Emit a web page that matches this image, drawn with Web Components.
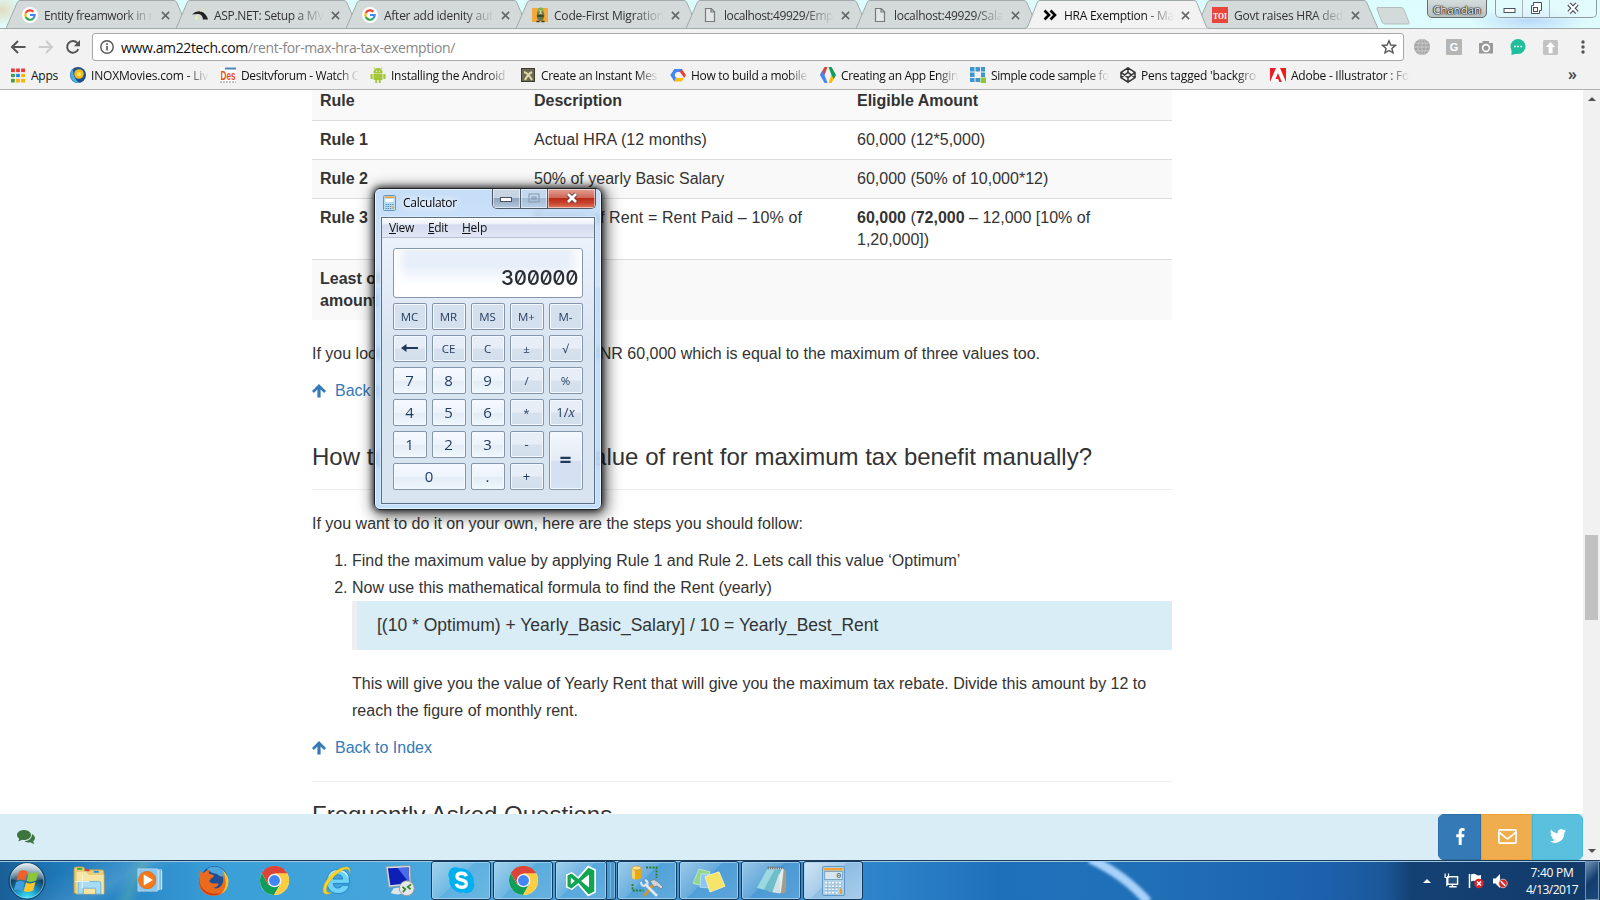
<!DOCTYPE html>
<html lang="en">
<head>
<meta charset="utf-8">
<title>HRA Exemption</title>
<style>
html,body{margin:0;height:100%}
body{width:1600px;height:900px;overflow:hidden;background:#fff;font-family:"Liberation Sans",Arial,sans-serif}
</style>
</head>
<body>
<desktop-screen></desktop-screen>
<script>
const UI = '"Open Sans","Noto Sans",sans-serif';

const CHROME = `<circle cx="16" cy="16" r="15" fill="#fff"/><path d="M16 16 3 8.500A15 15 0 0 1 29 8.500H16z" fill="#db4437"/><path d="M3 8.500A15 15 0 0 0 15.500 31L22 19.500 9.500 20z" fill="#0f9d58"/><path d="M29 8.500A15 15 0 0 1 15.500 31L22.500 19 16 8.500z" fill="#ffcd40"/><path d="M3 8.500 9.500 20 16 16V8.500h13A15 15 0 0 0 3 8.500z" fill="#db4437"/><circle cx="16" cy="16" r="7" fill="#f5f5f5"/><circle cx="16" cy="16" r="5.600" fill="#4285f4"/>`;

const ICONS = {
  google: ['0 0 16 16', `<circle cx="8" cy="8" r="8" fill="#fff"/><g fill="none" stroke-width="2.200"><path d="M11.400 4.800A4.700 4.700 0 0 0 3.800 5.900" stroke="#ea4335"/><path d="M3.800 5.900a4.700 4.700 0 0 0 0 4.200" stroke="#fbbc05"/><path d="M3.800 10.100a4.700 4.700 0 0 0 7.300 1.500" stroke="#34a853"/><path d="M11.100 11.600A4.700 4.700 0 0 0 12.700 8H8" stroke="#4285f4"/></g>`],
  aspnet: ['0 0 16 16', `<path d="M0 7.500Q4 3.500 9 4.500q5 1.500 7 8h-5q-.5-5-4.500-5.500Q3 6.800 0 7.500z" fill="#222"/><path d="M2 12.500 4.500 8l2 4.500z" fill="#dff0b0"/><path d="M8 4.500q2-2 3-2" stroke="#e8e8a0" fill="none"/>`],
  migrate: ['0 0 16 16', `<rect y="1" width="16" height="14" fill="#f5a83c"/><ellipse cx="8.500" cy="8.500" rx="3.800" ry="5.500" fill="#6a7a48"/><circle cx="8.500" cy="3.500" r="3" fill="#7fb04e"/><circle cx="8.500" cy="5" r="2" fill="#d6cf9a"/><path d="M4.500 14.500h3M9.500 14.500h3M5.500 9h6M6.500 5h1M9.500 5h1" stroke="#2c3a1d" stroke-width="1.300"/>`],
  doc: ['0 0 16 16', `<path d="M3.500 1.500h5.800l3.200 3.200v9.800h-9zM9 1.500V5h3.500" fill="#e4e6e6" stroke="#757a7a" stroke-width="1.200"/>`],
  chevs: ['0 0 16 16', `<path d="M2.500 3.500 7 8l-4.500 4.500M8.500 3.500 13 8l-4.500 4.500" fill="none" stroke="#000" stroke-width="2.600"/>`],
  toi: ['0 0 16 16', `<rect width="16" height="16" fill="#e8463c"/><text x="8" y="11.500" text-anchor="middle" textLength="14" lengthAdjust="spacingAndGlyphs" font-family="Liberation Serif" font-weight="bold" font-size="9" fill="#fff">TOI</text>`],
  x: ['0 0 10 10', `<path d="M1 1 9 9M9 1 1 9" stroke="#5f6464" stroke-width="1.700"/>`],
  back: ['0 0 16 16', `<path d="M15.500 8H2.500M8 2 2 8l6 6" fill="none" stroke="#555" stroke-width="2"/>`],
  fwd: ['0 0 16 16', `<path d="M.5 8h13M8 2l6 6-6 6" fill="none" stroke="#ccc" stroke-width="2"/>`],
  reload: ['0 0 16 16', `<path d="M13.300 10.200A5.800 5.800 0 1 1 12.300 4" fill="none" stroke="#555" stroke-width="2"/><path d="M15 1v6.200H8.800z" fill="#555"/>`],
  info: ['0 0 16 16', `<circle cx="8" cy="8" r="6.200" fill="none" stroke="#555" stroke-width="1.400"/><path d="M8 7v4.500M8 4.300v1.600" stroke="#555" stroke-width="1.600"/>`],
  star: ['0 0 16 16', `<path d="M8 1.800 9.800 6l4.600.4-3.500 3 1.100 4.500L8 11.500l-4 2.400 1.100-4.500-3.500-3L6.200 6z" fill="none" stroke="#555" stroke-width="1.400"/>`],
  globe: ['0 0 16 16', `<circle cx="8" cy="8" r="8" fill="#a5a5a5"/><path d="M8 0v16M0 8h16M1.500 4.200h13M1.500 11.800h13" stroke="#c9c9c9" fill="none"/><ellipse cx="8" cy="8" rx="4" ry="8" stroke="#c9c9c9" fill="none"/>`],
  gbox: ['0 0 16 16', `<rect width="16" height="16" rx="1" fill="#b5b5b5"/><text x="8" y="12" text-anchor="middle" font-family="Liberation Sans" font-weight="bold" font-size="11" fill="#fff">G</text>`],
  cam: ['0 0 16 16', `<path d="M1 4h3.500V2H11v2h4v10.500H1z" fill="#999"/><circle cx="8" cy="9" r="3.400" fill="none" stroke="#fff" stroke-width="1.600"/>`],
  chat: ['0 0 16 16', `<circle cx="8" cy="7.500" r="7.500" fill="#1fbf9c"/><path d="M1.500 9v7l6-1.500z" fill="#1fbf9c"/><path d="M4 7.500h1.800M7.200 7.500H9M10.400 7.500h1.800" stroke="#fff" stroke-width="1.700"/>`],
  upbox: ['0 0 16 16', `<rect width="16" height="16" rx="1.500" fill="#c3c3c3"/><path d="m8 2 5 5.500h-2.800V14H6V7.500H3z" fill="#fff"/>`],
  dots: ['0 0 16 16', `<g fill="#555"><circle cx="8" cy="3" r="1.700"/><circle cx="8" cy="8" r="1.700"/><circle cx="8" cy="13" r="1.700"/></g>`],
  apps: ['0 0 16 16', `<path d="M1 1.500h4v4H1zM6 1.500h4v4H6zM11 1.500h4v4h-4z" fill="#e53935"/><path d="M1 6.500h4v4H1z" fill="#43a047"/><path d="M6 6.500h4v4H6z" fill="#1e88e5"/><path d="M11 6.500h4v4h-4z" fill="#fbb300"/><path d="M1 11.500h4v4H1z" fill="#43a047"/><path d="M6 11.500h4v4H6zM11 11.500h4v4h-4z" fill="#fbb300"/><path d="M5.500 1v15M10.500 1v15M0 6h16M0 11h16" stroke="#f2f2f2" stroke-width="1.300"/>`],
  inox: ['0 0 16 16', `<circle cx="8" cy="8" r="8" fill="#1c4f8c"/><path d="M3 2a8 8 0 0 0 6.500 13.800Q3 12 3 2z" fill="#49b0e6"/><circle cx="9" cy="7" r="4.800" fill="#f5b81c"/><circle cx="9" cy="7" r="2.200" fill="#fde25a"/>`],
  des: ['0 0 16 16', `<rect width="16" height="16" fill="#fff"/><text x=".5" y="12.500" textLength="15" lengthAdjust="spacingAndGlyphs" font-family="Liberation Sans" font-weight="bold" font-size="12" fill="#e8501c">Des</text><path d="M5 1.500h11" stroke="#4b86b8" stroke-width="2"/><path d="M0 15h16" stroke="#888" stroke-dasharray="2 1"/>`],
  android: ['0 0 16 16', `<path d="M3.500 6.500V5a4.500 4 0 0 1 9 0v1.500z" fill="#a4c639"/><path d="m4 .5 1.500 2M12 .5l-1.500 2" stroke="#a4c639"/><path d="M3.500 7h9v6h-1.800v3H8.800v-3H7.200v3H5.300v-3H3.500zM.5 7h2.200v5H.5zM13.300 7h2.200v5h-2.200z" fill="#a4c639"/><path d="M6 4.200h1M9 4.200h1" stroke="#fff"/>`],
  xbox: ['0 0 16 16', `<rect x="1" y="1" width="14" height="14" fill="#6b6a55"/><path d="M4 5q4 1 8 8M12 5Q8 7 5 13" stroke="#e2d9a8" stroke-width="2" fill="none"/><rect x="1.500" y="1.500" width="13" height="13" fill="none" stroke="#3b3b30"/>`],
  gcloud: ['0 0 16 16', `<path d="M4.500 2h7L13 4.500 8 5.500 4 8 2.500 5.500z" fill="#4285f4"/><path d="M11.500 1.500 15.800 8l-1.500 2.500L10 5z" fill="#ea4335"/><path d="M4.500 2 .3 8l4 6.500 3-3.500L4.500 8 7 4z" fill="#4285f4"/><path d="m4.300 14.500 1.500-3.500h5.500l2.900-.5-2.500 4z" fill="#fbbc05"/><path d="m10 5 5.800 3-1.500 2.500z" fill="#ea4335"/><circle cx="8" cy="8" r="3" fill="#f5f5f5"/>`],
  gdev: ['0 0 16 16', `<path d="M4.500 0H7.500L4.500 8H0z" fill="#db4437"/><path d="M0 8 2.200 3.800 4.500 8l3 8h-3z" fill="#4285f4"/><path d="M11.500 0h-3l3 8H16z" fill="#0f9d58"/><path d="M16 8h-4.500l-3 8h3z" fill="#fbbc05"/><path d="m11.500 8 2.200 4L16 8z" fill="#0f9d58"/>`],
  blocks: ['0 0 16 16', `<g fill="#3d96d0"><path d="M0 0h4.500v4.500H0zM5.500 0H10v4.500H5.500zM11 0h4v4.500h-4zM0 5.500h4.500V10H0zM11 5.500h4V10h-4zM0 11h4.500v4H0zM5.500 11H10v4H5.500z"/></g><path d="M10.500 10.500H16V16h-5.500z" fill="#8cc63e"/>`],
  codepen: ['0 0 16 16', `<path d="m8 .8 7 4.500v5.400l-7 4.500-7-4.500V5.300zM8 .8v4.700M8 10.500v4.700M1 5.300l7 5.200 7-5.200M1 10.700l7-5.200 7 5.200" fill="none" stroke="#333" stroke-width="1.500"/>`],
  adobe: ['0 0 16 16', `<rect y="1" width="16" height="14" fill="#fff"/><path d="M0 1h6L0 15zM16 1h-6l6 14zM8 6l3.800 9H9.300l-1.100-3H5.500z" fill="#ed1c24"/>`],
  arrowup: ['0 0 14 14', `<path d="m7 0 7 7-1.900 1.900-3.500-3.500V13.500H5.400V5.400L1.900 8.900 0 7z" fill="#337ab7"/>`],
  comments: ['0 0 18 14', `<path d="M7 0c4 0 7 2.300 7 5s-3 5-7 5q-1 0-2-.2Q3.300 11.200.9 11.300q1.200-1 1.300-2.500Q0 7.300 0 5c0-2.700 3-5 7-5z" fill="#3c763d"/><path d="M15 4q3 1.500 3 4 0 1.900-1.800 3.200.2 1.600 1.300 2.500-2.500 0-4-1.500-3.500.7-6-1 7.500-.7 7.500-7.200z" fill="#3c763d"/>`],
  fb: ['0 0 10 18', `<path d="M9.500.2v2.900H7.800C6.500 3.100 6.300 3.700 6.300 4.600v2h3.100l-.4 3.200H6.300V18H3V9.800H.3V6.600H3V4.200C3 1.500 4.600 0 7.100 0q1.600 0 2.400.2z" fill="#fff"/>`],
  mail: ['0 0 19 15', `<rect x=".9" y=".9" width="17.200" height="13.200" rx="1.200" fill="none" stroke="#fff" stroke-width="1.700"/><path d="M1.500 3.500 8.500 9.300q1 .8 2 0L17.500 3.500" fill="none" stroke="#fff" stroke-width="1.700"/>`],
  tw: ['0 0 24 20', `<path d="M24 2.400a10 10 0 0 1-2.800.8A4.900 4.900 0 0 0 23.300.5a10 10 0 0 1-3.100 1.200 4.900 4.900 0 0 0-8.400 4.500A14 14 0 0 1 1.700 1a4.900 4.900 0 0 0 1.500 6.600A5 5 0 0 1 1 7c0 2.300 1.700 4.400 3.900 4.900a5 5 0 0 1-2.200.1 4.900 4.900 0 0 0 4.600 3.400A9.900 9.900 0 0 1 0 17.500 14 14 0 0 0 21.500 5q1.500-1.100 2.500-2.600z" fill="#fff"/>`],
  calcsmall: ['0 0 13 16', `<rect x=".5" y=".5" width="12" height="15" rx="1" fill="#b9dcf2" stroke="#5f98c4"/><path d="M1.500 2.200h10" stroke="#f0a238" stroke-width="1.500"/><rect x="2.500" y="4" width="8" height="3" fill="#fff"/><path d="M2.500 9.500h8M2.500 11.500h6M2.500 13.500h6" stroke="#4f8fc0" stroke-dasharray="1.400 .8"/><path d="M10 11v3" stroke="#f0a030" stroke-width="1.500"/>`],
  calc: ['0 0 22 30', `<rect x=".5" y=".5" width="21" height="29" rx="1.500" fill="#b0d3ec" stroke="#5f98c4"/><rect x="2" y="2" width="18" height="2.500" fill="#f0a238"/><rect x="2.500" y="5.500" width="17" height="8" fill="#d6e6ef" stroke="#7fa6c4"/><text x="18.500" y="12.500" text-anchor="end" font-family="Liberation Mono" font-size="8" fill="#345">0</text><path d="M3 17h16M3 20.300h16M3 23.600h12M3 26.900h12" stroke="#6d9cc2" stroke-width="2.500" stroke-dasharray="2.500 .8"/><path d="M3 16.800h16M3 20.100h16M3 23.400h12M3 26.700h12" stroke="#fff" stroke-width="1.900" stroke-dasharray="2.100 1.200"/><rect x="17" y="22.500" width="2.200" height="5.500" fill="#f0a030"/>`],
  orb: ['0 0 38 38', `<defs><radialGradient id="o" cx=".5" cy="1" r="1"><stop offset="0" stop-color="#3ff1ff"/><stop offset=".35" stop-color="#1a8fc4"/><stop offset=".65" stop-color="#12405f"/><stop offset="1" stop-color="#8fb3c6"/></radialGradient><linearGradient id="g" x2="0" y2="1"><stop stop-color="#fff" stop-opacity=".75"/><stop offset="1" stop-color="#fff" stop-opacity=".12"/></linearGradient></defs><circle cx="19" cy="19" r="18" fill="url(#o)" stroke="#123a55"/><circle cx="19" cy="19" r="16.800" fill="none" stroke="#a8dcee" stroke-opacity=".6"/><path d="M3 17a16 16 0 0 1 32 0q-16 5-32 0z" fill="url(#g)"/><path d="M11 9.500q4-2.500 8.500 0l-2.300 9q-4-2.200-8.500 0z" fill="#f0602a"/><path d="M21 10q4 2.200 9.500-.5l-2.300 9q-5 2.500-9.500.5z" fill="#8cc63c"/><path d="M8.200 20q4-2.200 8.500 0l-2.300 8.500q-4-2.200-8.500 0z" fill="#3f9fe0"/><path d="M18 20.500q4.500 2.200 9.500-.5l-2.300 8.500q-5 2.500-9.500.5z" fill="#fbc52c"/>`],
  explorer: ['0 0 32 30', `<path d="M1 3q0-2 2-2h7l2 3h16q2 0 2 2v22H1z" fill="#e9cf7c" stroke="#b8954a" stroke-width=".8"/><path d="M4 2h5v2H4z" fill="#3fae2a"/><path d="M11 3.500h5v2h-5z" fill="#d6392e"/><path d="M20 5h5v2h-5z" fill="#2c8fd6"/><path d="M3 5.500h10l2 3h15V29H3z" fill="#f6e6a2" stroke="#d8bc6a" stroke-width=".6"/><path d="M5 29V18q0-2 2-2h18q2 0 2 2v11h-5v-6H10v6z" fill="#a6dcf4" stroke="#5fa8d6" stroke-width=".8"/><path d="M9 9v14M2 16h14" stroke="#fff" stroke-opacity=".8"/>`],
  wmp: ['0 0 30 26', `<rect x="6" y="1" width="20" height="22" fill="#b8dcf2" opacity=".6"/><path d="M22.500 2v21M25.500 3v19" stroke="#d6ecf8" stroke-width="1"/><rect x="1" y="1" width="20" height="23" fill="#8fc5e8" stroke="#c0e0f4" stroke-width=".8"/><circle cx="10.500" cy="12.500" r="9" fill="#f27a1a" stroke="#c85a10" stroke-width=".5"/><path d="M7 6.800v11.400l9.500-5.700z" fill="#fff"/>`],
  firefox: ['0 0 32 32', `<circle cx="17" cy="14.500" r="13.500" fill="#1d4f94"/><path d="M9 4q8-5 16 0 4 4 3 8-5 1-9-3-6-1-10-5z" fill="#4ea6dd"/><path d="M2 6q1.500 2.500 4 2 3-3 6-3-1.500 2-.5 4l5 1.500q0 2.500-3 3.500l-2 2.500q2 3.500 6 2.500 2-.5 4 .5-2 3.500-6 4 5 2 8.500-2 3.500-5 1-12 6 5 5 11-1 11-14 11.500Q3 31 1 20 .5 12 2 6z" fill="#ec6a1e"/><path d="M25.500 5q6 6 6 12-.5 10-8 13 7-6 4.500-16-.5-5-2.500-9z" fill="#fbc22d"/><path d="M1.500 12q-1 9 5 14 8 6 19 2-11 7-20-1-6-7-4-15z" fill="#c43c1a"/>`],
  chrome: ['0 0 32 32', CHROME],
  ie: ['0 0 34 32', `<path d="M18 4.500C10.500 4.500 6 10 6 17s5 12.500 12 12.500c6 0 10.500-3 12-8.500h-7.500q-1.300 2.800-4.500 2.800-4.500 0-5-4.800h17.500Q31.500 4.500 18 4.500zm-5 10Q13.500 10 18 10t5 4.500z" fill="#6fd3f7" stroke="#1f86c4"/><path d="M9 12q3-6 9-6 8 0 10.500 6" fill="none" stroke="#c4f0ff" stroke-width="1.500"/><path d="M30.500 9Q32.500 1.500 26 2 16 3.500 8 13 1 22 2.500 28q2 4 9 .5Q5.500 29.500 5.500 25 7 18 14 11.500 23 4 27.500 4.200 31 5 30.500 9z" fill="#fbd42a" stroke="#d9a514" stroke-width=".5"/>`],
  rdp: ['0 0 32 32', `<path d="m2 1.500 25-1 1 19.500-23 3z" fill="#d9dfe6" stroke="#8b969f" stroke-width=".8"/><path d="m4 3.300 21.500-.8.700 16-19.700 2.300z" fill="#0d1fb5"/><path d="m14 3 11.500-.5.700 16z" fill="#4b6be8"/><path d="m10 24 8-1 2 6q-6 3-13 0z" fill="#dfe4e8"/><circle cx="23.500" cy="24" r="7.700" fill="#e6e6e6" stroke="#9a9a9a"/><path d="m19 22.500 3 2.500-2.500 3M28 20l-3.500 2.500 3 2.500" fill="none" stroke="#2f8a2f" stroke-width="1.800"/>`],
  skype: ['0 0 30 30', `<path d="M8.500 1A8 8 0 0 1 13 2.500 13 13 0 0 1 27.500 17 8 8 0 0 1 17 27.500 13 13 0 0 1 2.500 13 8 8 0 0 1 8.500 1z" fill="#00aff0"/><path d="M20 10.500Q19 7.500 15 7.500q-4.700 0-4.700 3.300 0 2.700 4.500 3.600 5.200 1 5.200 4.100 0 3.500-5 3.500-4.500 0-5.500-3.500" fill="none" stroke="#fff" stroke-width="3.400"/>`],
  vs: ['0 0 32 32', `<path d="M1 9.500 7 7l6 5L23 .5l8 4v23l-8 4L13 20l-6 5-6-2.500z" fill="#fff"/><path d="m2.500 10.500 4-2L13.500 14 23.500 2.800l5.800 2.800v20.800l-5.800 2.800L13.500 18l-7 5.500-4-2z" fill="#0fa551"/><path d="M5.800 12.500v7l4-3.500zM24 9.500v13L16 16z" fill="#fff"/>`],
  tools: ['0 0 32 32', `<path d="M1 3v10q4.500 3 9 0V3z" fill="#e8a818"/><path d="M1 3v10q1.500 1 3 1.400V4z" fill="#f8d468"/><ellipse cx="5.500" cy="3" rx="4.500" ry="2" fill="#fbe08c" stroke="#b87d10" stroke-width=".5"/><path d="M15 2.500h10.500V13M1.500 19v6.500h11" fill="none" stroke="#2f7d22" stroke-width="1.800" stroke-dasharray="2 1.300"/><path d="m13 31 10-12" stroke="#e0921e" stroke-width="2.600"/><path d="m14 19 12 12" stroke="#e3e9ee" stroke-width="2.600"/><path d="M10 17q0 4 4 4M14 15q3 1 2.500 4.500" fill="none" stroke="#dfe5ea" stroke-width="2"/><path d="m19 16 4-1.500 4 2.500 5 5-2 2-4-3-3 1z" fill="#cdd4da" stroke="#5c6870" stroke-width=".6"/>`],
  notes: ['0 0 34 26', `<path d="m7 1 11 3-5 15-12-3z" fill="#93d88a" stroke="#dff5da" stroke-width=".6"/><path d="m9 6 13 1-1 14-13-1z" fill="#8cc4f4" stroke="#dcefff" stroke-width=".6"/><path d="m13 9 14-5 6 15-15 6z" fill="#f8e468" stroke="#fff7c0" stroke-width=".8"/>`],
  notepad: ['0 0 32 32', `<path d="m27 4 4 2v22l-5 2z" fill="#a69c88"/><path d="M12 3h17l-3 26-13-2z" fill="#e6eef0" stroke="#8f9a9c" stroke-width=".5"/><path d="M11.500 4.500h15L17 28 1 23.500z" fill="#6fbccb"/><path d="M11.500 4.500h8L8 25.500l-7-2z" fill="#9bd8e0"/><path d="m24 8-7 20 8 1.500z" fill="#cfe3e6"/><path d="M12 3h17" stroke="#6d7476" stroke-width="3" stroke-dasharray="1.300 1"/>`],
  net: ['0 0 16 16', `<rect x="4" y="4" width="10.500" height="8" fill="#24507e" stroke="#fff" stroke-width="1.500"/><path d="M9 12v2.500M5.500 14.700h8" stroke="#fff" stroke-width="1.500"/><path d="M1.200.5v4.300h3.600V.5M3 5v9" stroke="#fff" stroke-width="1.300" fill="none"/>`],
  flag: ['0 0 16 16', `<path d="M1.500 1v14" stroke="#fff" stroke-width="1.500"/><path d="M3 1.500q3-1.500 5 0t5 .5v7q-3 1-5-.5T3 8.500z" fill="#fff"/><circle cx="11" cy="10.500" r="4.800" fill="#d8262b"/><path d="m9 8.500 4 4M13 8.500l-4 4" stroke="#fff" stroke-width="1.500"/>`],
  mute: ['0 0 16 16', `<path d="M1 5.500h2.500L8 1v14l-4.500-4.500H1z" fill="#fff"/><circle cx="11" cy="10.500" r="4.300" fill="#d8262b" stroke="#fff" stroke-width=".6"/><path d="m8.800 8.300 4.400 4.400" stroke="#fff" stroke-width="1.500"/>`]
};

/* Registers an element whose shadow root is filled from a template. */
function component(name, css, html, after) {
  const t = document.createElement('template');
  t.innerHTML = `<style>*{box-sizing:border-box}${css}</style>${html}`;
  customElements.define(name, class extends HTMLElement {
    connectedCallback() {
      if (this.shadowRoot) return;
      const root = this.attachShadow({mode: 'open'});
      root.append(t.content.cloneNode(true));
      if (after) after(this, root);
    }
  });
}

/* Puts a named icon in place of the element with id "i". */
function placeIcon(el, root) {
  const ic = document.createElement('ui-icon');
  ic.setAttribute('name', el.getAttribute('icon'));
  root.getElementById('i').replaceWith(ic);
}

/* <ui-icon name w h> */
component('ui-icon', `:host{display:block;flex:none}svg{display:block}`, '', (el, root) => {
  const [box, body] = ICONS[el.getAttribute('name')];
  const w = el.getAttribute('w') || 16, h = el.getAttribute('h') || w;
  const holder = document.createElement('template');
  holder.innerHTML = `<svg width="${w}" height="${h}" viewBox="${box}" preserveAspectRatio="none">${body}</svg>`;
  root.append(holder.content);
});

component('browser-tab', `
:host{display:block;width:170px;height:29px;flex:none;position:relative}
svg{position:absolute;left:0;top:0;overflow:visible}
.in{position:relative;display:flex;align-items:center;height:29px;padding:1px 0 0 17px}
.t{width:110px;margin-left:6px;overflow:hidden;white-space:nowrap;font-size:12px;color:#333;-webkit-mask-image:linear-gradient(90deg,#000 80px,transparent 110px)}
.c{margin-left:7px}
:host([active]){z-index:3}
:host([active]) .t{color:#111}`,
`<svg width="184" height="29"><path/></svg><div class="in"><span id="i"></span><div class="t"><slot></slot></div><ui-icon class="c" name="x" w="9"></ui-icon></div>`,
(el, root) => {
  const a = el.hasAttribute('active'), p = root.querySelector('path');
  p.setAttribute('d', a ? 'M-1 28.500Q2 28.500 3 26L12 3Q13 .5 15 .5H169Q171 .5 172 3L181 26Q182 28.500 185 28.500' : 'M1 28.500 12 3Q13 .5 15 .5H169Q171 .5 172 3L183 28.500z');
  p.setAttribute('fill', a ? '#f2f2f2' : '#d4dada');
  p.setAttribute('stroke', '#a2a9a9');
  placeIcon(el, root);
});

component('bookmark-item', `
:host{display:flex;align-items:center;width:150px;height:20px;flex:none}
ui-icon{margin-right:5px}
.t{width:119px;overflow:hidden;white-space:nowrap;font-size:12px;color:#111;-webkit-mask-image:linear-gradient(90deg,#000 96px,transparent 118px)}
:host([short]){width:60px}:host([short]) .t{-webkit-mask-image:none;width:40px}`,
`<span id="i"></span><div class="t"><slot></slot></div>`, placeIcon);

component('caption-buttons', `
:host{display:flex;height:18px;width:102px;border:1px solid #8c9ba0;border-top:0;border-radius:0 0 5px 5px;background:#e6fbfcaa;box-shadow:0 0 2px #fff}
span{display:flex;align-items:center;justify-content:center;width:27px;border-right:1px solid #a8b4b8}
span:last-child{flex:1;border:0}svg{display:block}`,
`<span><svg width="13" height="18"><rect x="1" y="8.500" width="11" height="4" fill="#fff" stroke="#4a4f5c"/></svg></span>
<span><svg width="14" height="18"><path d="M4.500 2.500h8v8h-2v3h-8v-8h2z" fill="#fff" stroke="#4a4f5c"/><rect x="4.500" y="7.500" width="4" height="4" fill="none" stroke="#4a4f5c"/></svg></span>
<span><svg width="14" height="18"><path d="m3 4 8 8.500M11 4l-8 8.500" stroke="#4a4f5c" stroke-width="4.600"/><path d="m3 4 8 8.500M11 4l-8 8.500" stroke="#fff" stroke-width="2.200"/></svg></span>`);

component('browser-chrome', `
:host{display:block;height:90px;font-family:${UI}}
.strip{height:29px;display:flex;padding-left:5px;position:relative;overflow:hidden;background:radial-gradient(ellipse 60px 14px at 1530px 20px,#b8d8fa,transparent),radial-gradient(ellipse 20px 16px at 2px 10px,#e2dcc0,transparent),linear-gradient(180deg,#dcfdfd,#dffcfd)}
.strip:after{content:"";position:absolute;left:0;right:0;bottom:0;height:1px;background:#a2a9a9;z-index:2}
.new{margin:7px 0 0 11px}
.user{margin:-1px 0 0 17px;width:60px;height:19px;border:1px solid #666d70;border-radius:0 0 5px 5px;background:linear-gradient(#d5dcdc,#b9c1c1);text-align:center;font-size:11.500px;line-height:19px;color:#fff;text-shadow:0 0 1px #000,0 0 1px #000,0 0 1px #000,0 0 2px #222}
caption-buttons{margin-left:8px}
.bar{height:32px;margin-top:0;background:#f2f2f2;display:flex;align-items:center;padding:4px 0 0 10px}
.omni{height:28px;width:1312px;margin-left:11px;border:1px solid #a9a9a9;border-radius:3px;background:#fff;display:flex;align-items:center;padding:0 6px}
.url{margin-left:6px;flex:1;font-size:14px;color:#888;white-space:nowrap}.url b{font-weight:400;color:#111}
.marks{height:29px;background:#f2f2f2;border-bottom:1px solid #b1b1b1;display:flex;align-items:center;padding-left:10px}
.more{margin:-2px 0 0 148px;width:30px;font-size:16px;font-weight:600;color:#444;line-height:14px}`,
`<div class="strip">
<browser-tab icon="google"><fit-text w="109">Entity freamwork in r</fit-text></browser-tab>
<browser-tab icon="aspnet"><fit-text w="110">ASP.NET: Setup a MV</fit-text></browser-tab>
<browser-tab icon="google"><fit-text w="109">After add idenity aut</fit-text></browser-tab>
<browser-tab icon="migrate"><fit-text w="110">Code-First Migration</fit-text></browser-tab>
<browser-tab icon="doc"><fit-text w="109">localhost:49929/Emp</fit-text></browser-tab>
<browser-tab icon="doc"><fit-text w="109">localhost:49929/Sala</fit-text></browser-tab>
<browser-tab icon="chevs" active><fit-text w="110">HRA Exemption - Ma</fit-text></browser-tab>
<browser-tab icon="toi"><fit-text w="109">Govt raises HRA ded</fit-text></browser-tab>
<svg class="new" width="34" height="18"><path d="M2 .5H25q2 0 3 2l5 13q.5 1.500-1 1.500H9q-2 0-3-2L1 2Q.5.500 2 .5z" fill="#d2dada" stroke="#b3bdbd"/></svg>
<div class="user">Chandan</div><caption-buttons></caption-buttons>
</div>
<div class="bar"><ui-icon name="back"></ui-icon><ui-icon name="fwd" style="margin-left:12px"></ui-icon><ui-icon name="reload" style="margin-left:11px"></ui-icon>
<div class="omni"><ui-icon name="info"></ui-icon><div class="url"><fit-text w="334"><b>www.am22tech.com</b>/rent-for-max-hra-tax-exemption/</fit-text></div><ui-icon name="star"></ui-icon></div>
<ui-icon name="globe" style="margin-left:10px"></ui-icon><ui-icon name="gbox" style="margin-left:16px"></ui-icon><ui-icon name="cam" style="margin-left:16px"></ui-icon><ui-icon name="chat" style="margin-left:16px"></ui-icon><ui-icon name="upbox" w="15" style="margin-left:17px"></ui-icon><ui-icon name="dots" style="margin-left:17px"></ui-icon></div>
<div class="marks">
<bookmark-item short icon="apps"><fit-text w="27">Apps</fit-text></bookmark-item>
<bookmark-item icon="inox"><fit-text w="117">INOXMovies.com - Liv</fit-text></bookmark-item>
<bookmark-item icon="des"><fit-text w="118">Desitvforum - Watch C</fit-text></bookmark-item>
<bookmark-item icon="android"><fit-text w="114">Installing the Android</fit-text></bookmark-item>
<bookmark-item icon="xbox"><fit-text w="116">Create an Instant Mes</fit-text></bookmark-item>
<bookmark-item icon="gcloud"><fit-text w="116">How to build a mobile</fit-text></bookmark-item>
<bookmark-item icon="gdev"><fit-text w="117">Creating an App Engin</fit-text></bookmark-item>
<bookmark-item icon="blocks"><fit-text w="118">Simple code sample fo</fit-text></bookmark-item>
<bookmark-item icon="codepen"><fit-text w="115">Pens tagged 'backgro</fit-text></bookmark-item>
<bookmark-item icon="adobe"><fit-text w="118">Adobe - Illustrator : Fo</fit-text></bookmark-item>
<div class="more">»</div></div>`);

component('back-link', `
:host{display:flex;align-items:center;height:27px;line-height:27px;color:#337ab7}
ui-icon{margin-right:9px}`,
`<ui-icon name="arrowup" w="14" h="14"></ui-icon><slot></slot>`);

component('rule-table', `
:host{display:block}
div{display:grid;grid-template-columns:214px 323px 323px;border-top:1px solid #ddd;line-height:22px}
div:nth-of-type(odd){background:#f9f9f9}
div:first-of-type{border:0;height:30px}div:first-of-type p{padding-top:0}
p{margin:0;padding:8px}p:first-child,.h{font-weight:700}`,
`<div><p>Rule</p><p class="h">Description</p><p class="h">Eligible Amount</p></div>
<div><p>Rule 1</p><p><fit-text w="173">Actual HRA (12 months)</fit-text></p><p>60,000 (12*5,000)</p></div>
<div><p>Rule 2</p><p>50% of yearly Basic Salary</p><p>60,000 (50% of 10,000*12)</p></div>
<div><p>Rule 3</p><p><fit-text w="268">Excess of Rent = Rent Paid – 10% of</fit-text></p><p><b>60,000</b> (<b>72,000</b> – 12,000 [10% of<br>1,20,000])</p></div>
<div><p>Least of<br>amount</p><p></p><p></p></div>`);

component('formula-box', `:host{display:block;height:49px;background:#d9edf7;border-left:5px solid #eee;padding-left:20px;font-size:17.500px;line-height:49px}`, `<slot></slot>`);

component('article-page', `
:host{display:block;height:724px;overflow:hidden;padding-left:312px;color:#333;font-size:16px;background:#fff}
main{width:860px}
p{margin:0;line-height:27px}
.split{display:flex;justify-content:space-between;white-space:nowrap}
h3{margin:0;font-size:24px;font-weight:400;line-height:26px;height:46px;border-bottom:1px solid #eee}
ol{margin:10px 0 0;padding-left:40px;line-height:27px}`,
`<main><rule-table></rule-table>
<p class="split" style="width:728px;margin-top:20px"><span>If you look at</span><span>INR 60,000 which is equal to the maximum of three values too.</span></p>
<back-link style="margin-top:10px">Back to Index</back-link>
<h3 style="margin-top:40px"><span class="split" style="width:780px"><span>How to</span><span>value of rent for maximum tax benefit manually?</span></span></h3>
<p style="margin-top:20px">If you want to do it on your own, here are the steps you should follow:</p>
<ol><li>Find the maximum value by applying Rule 1 and Rule 2. Lets call this value ‘Optimum’</li>
<li>Now use this mathematical formula to find the Rent (yearly)<formula-box><fit-text w="501.500">[(10 * Optimum) + Yearly_Basic_Salary] / 10 = Yearly_Best_Rent</fit-text></formula-box>
<p style="margin-top:20px">This will give you the value of Yearly Rent that will give you the maximum tax rebate. Divide this amount by 12 to reach the figure of monthly rent.</p></li></ol>
<back-link style="margin-top:10px">Back to Index</back-link>
<h3 style="margin-top:20px;border-top:1px solid #eee;padding-top:20px">Frequently Asked Questions</h3></main>`);

component('share-bar', `
:host{display:flex;height:46px;background:#d9edf7;align-items:stretch;justify-content:space-between}
.c{padding:16px 0 0 17px}
.s{display:flex;width:145px;border-radius:6px;overflow:hidden}
.s span{display:flex;align-items:center;justify-content:center;width:51px;border:1px solid;padding:0 0 2px 1px}
.s span:nth-child(1){background:#337ab7;border-color:#2e6da4;width:43px;padding-left:2px}
.s span:nth-child(2){background:#f0ad4e;border-color:#eea236}
.s span:nth-child(3){background:#5bc0de;border-color:#46b8da}`,
`<div class="c"><ui-icon name="comments" w="18" h="14"></ui-icon></div>
<div class="s"><span><ui-icon name="fb" w="9" h="17"></ui-icon></span><span><ui-icon name="mail" w="19" h="15"></ui-icon></span><span><ui-icon name="tw" w="16" h="14"></ui-icon></span></div>`);

component('scroll-bar', `
:host{display:flex;flex-direction:column;width:17px;background:#f1f1f1;align-items:center;justify-content:space-between}
i{display:block;width:13px;height:85px;background:#c1c1c1;margin-top:434px}
svg{display:block;flex:none}.u{margin:7px 0 0}.d{margin:auto 0 7px}`,
`<svg class="u" width="8" height="4"><path d="M4 0 8 4H0z" fill="#505050"/></svg><i></i><svg class="d" width="8" height="4"><path d="M0 0h8L4 4z" fill="#505050"/></svg>`);

component('calc-key', `
:host{display:flex;align-items:center;justify-content:center;border:1px solid #8596ac;border-radius:2px;box-shadow:inset 0 0 0 1px #f4f9ff;font-size:11.500px;color:#1e395b;background:linear-gradient(#e8eef7 0 48%,#d7e1ee 52%,#d3dfec);padding:0 1px 1px 0}
:host([kind=num]){font-size:15px;background:linear-gradient(#f6f9fe 0,#ecf3fb 50%,#e3ebf5 52%,#eff8fd)}
:host([kind=mem]){background:#d5e0ee}
:host([kind=op]){font-size:13px}
:host([kind=eq]){grid-row:span 2;font-size:21px;font-weight:700;background:linear-gradient(#f3f8fd,#e3ebf6 50%,#d4dfef 52%,#d5e2f5);padding-bottom:3px}
:host([wide]){grid-column:span 2}`, `<slot></slot>`);

component('calculator-window', `
:host{display:block;position:absolute;left:374px;top:188px;width:228px;height:322px;border:1px solid #1e2429;border-radius:6px;font-family:${UI};
box-shadow:inset 0 0 0 1px #f2f9ffcc,0 0 6px 1px #000b,2px 3px 15px 3px #0009;
background:linear-gradient(180deg,#b8d6f6cc,#c4dffccc 98px,#b2d5facc 99px,#b4d6fdd0);backdrop-filter:blur(3px)}
.bar{display:flex;height:28px;padding:6px 0 0 8px}
.title{margin:-1px 0 0 7px;font-size:12px;line-height:18px;color:#000;text-shadow:0 0 7px #fff,0 0 7px #fff;width:89px}
.caps{display:flex;margin-top:-6px;height:20px;border:1px solid #4e5a66;border-top:0;border-radius:0 0 5px 5px;overflow:hidden;width:104px}
.caps span{display:flex;align-items:center;justify-content:center;box-shadow:inset 0 0 0 1px #fff8;background:linear-gradient(#c8d4e2 45%,#8fa3bb 50%,#b4cae0);width:28px;border-right:1px solid #4e5a66}
.caps span:nth-child(2){background:linear-gradient(#c5d9ee 45%,#a5bcd5 50%,#b8d0e8);width:27px}
.caps span:last-child{flex:1;width:auto;border:0;padding-bottom:1px;background:linear-gradient(#e3a194,#cd6a59 45%,#b92b16 50%,#c9452f 75%,#de7a5c)}
.client{margin:0 6px;height:287px;border:1px solid #5d6f82;box-shadow:0 0 0 1px #e2f1ff99;background:linear-gradient(#eef4fd,#d9e4f1 45%);width:214px}
.menu{display:flex;height:20px;gap:14px;padding-left:7px;font-size:12px;line-height:19px;color:#111;background:linear-gradient(#fff 0,#eceffa 6px,#d4dbee 7px,#e2e7f6);border-bottom:1px solid #b9c0d6}
u{text-underline-offset:1px}
.disp{height:50px;margin:10px 11px 5px;border:1px solid #8698ae;border-radius:3px;background:linear-gradient(90deg,#fff,transparent 14px calc(100% - 14px),#fff),linear-gradient(#e9f0fa,#e6eefa 16px,#fff 75%);box-shadow:inset 0 0 0 1px #fff;padding:17px 4px 0 0;text-align:right;font:500 20.500px/24px Inter,sans-serif;font-feature-settings:"zero","tnum";color:#2a2d33}
.keys{display:grid;grid-template-columns:repeat(5,34px);grid-auto-rows:27px;gap:5px;margin-left:11px}
i{font-family:"Liberation Serif";font-size:14px}`,
`<div class="bar"><ui-icon name="calcsmall" w="13" h="16"></ui-icon><div class="title"><fit-text w="54">Calculator</fit-text></div>
<div class="caps"><span><svg width="13" height="8"><rect x=".5" y="2.500" width="11" height="4" fill="#fff" stroke="#47525e"/></svg></span><span><svg width="13" height="11"><rect x="1" y="1" width="10" height="8" fill="none" stroke="#8296ad"/><rect x="4" y="4" width="4" height="2" fill="none" stroke="#8296ad"/></svg></span><span><svg width="14" height="12"><path d="m3 2 8 8M11 2l-8 8" stroke="#5b3434" stroke-width="4.400"/><path d="m3 2 8 8M11 2l-8 8" stroke="#fff" stroke-width="2.800"/></svg></span></div></div>
<div class="client"><div class="menu"><fit-text w="25"><u>V</u>iew</fit-text><fit-text w="20"><u>E</u>dit</fit-text><fit-text w="25"><u>H</u>elp</fit-text></div>
<div class="disp"><fit-text w="77">300000</fit-text></div>
<div class="keys">
<calc-key kind="mem">MC</calc-key><calc-key kind="mem">MR</calc-key><calc-key kind="mem">MS</calc-key><calc-key kind="mem">M+</calc-key><calc-key kind="mem">M-</calc-key>
<calc-key><svg width="17" height="8"><path d="M3 4h14" stroke="#1e395b" stroke-width="2"/><path d="m0 4 5.500-4v8z" fill="#1e395b"/></svg></calc-key><calc-key>CE</calc-key><calc-key>C</calc-key><calc-key>±</calc-key><calc-key>√</calc-key>
<calc-key kind="num">7</calc-key><calc-key kind="num">8</calc-key><calc-key kind="num">9</calc-key><calc-key>/</calc-key><calc-key>%</calc-key>
<calc-key kind="num">4</calc-key><calc-key kind="num">5</calc-key><calc-key kind="num">6</calc-key><calc-key>*</calc-key><calc-key kind="op"><span>1/<i>x</i></span></calc-key>
<calc-key kind="num">1</calc-key><calc-key kind="num">2</calc-key><calc-key kind="num">3</calc-key><calc-key kind="op">-</calc-key><calc-key kind="eq">=</calc-key>
<calc-key kind="num" wide>0</calc-key><calc-key kind="num">.</calc-key><calc-key kind="op">+</calc-key>
</div></div>`);

component('task-button', `
:host{display:flex;align-items:center;justify-content:center;width:60px;height:39px;flex:none;border:1px solid #14395c;border-radius:3px;box-shadow:inset 0 0 0 1px #a9d3eecc;background:linear-gradient(135deg,#ffffff80,#ffffff38 45%,#ffffff1c 46%,#ffffff30);margin-right:2px}
:host([on]){background:linear-gradient(135deg,#ffffffc8,#ffffff90 45%,#ffffff70 46%,#ffffff98)}`, `<slot></slot>`);

component('task-bar', `
:host{display:flex;height:40px;position:relative;border-top:1px solid #1b3a58;font-family:${UI};box-shadow:inset 0 1px 0 #9cc8e4;
background:linear-gradient(115deg,transparent 118px,#6fc0a855 130px,transparent 142px),linear-gradient(150deg,transparent 40px,#8fc4e444 75px,transparent 90px),linear-gradient(90deg,#1a5f98 0,#1e78b8 60px,#2b8ac8 140px,#3a9fd8 220px,#4aa8dc 460px,#3f9ad6 620px,#2f86cc 860px,#1f70bb 1000px,#2070b8 1140px,#1c60ab 1330px,#1a5798 1385px,#144174 1410px,#123a68 1600px)}
.arc{position:absolute;left:1080px;top:0}
.q{display:flex;align-items:center;width:431px;position:relative}
.b{display:flex;position:relative;width:960px}
.stack{width:10px;height:39px;margin:0 1px 0 -3px;border:solid #14395c;border-width:1px 1px 1px 0;border-radius:0 3px 3px 0;box-shadow:inset -1px 0 0 #a9d3ee99,inset -4px 0 0 #1c5a8f66,inset -5px 0 0 #a9d3ee88}
.tray{display:flex;align-items:center;gap:8px;position:relative;padding-left:32px}
.clock{color:#fff;font-size:12px;line-height:17px;text-align:center;width:62px;margin-left:5px;padding-top:1px;display:flex;flex-direction:column;align-items:center;white-space:nowrap}
.show{position:absolute;right:1px;top:0;width:14px;height:39px;border:1px solid #6f93b4;background:linear-gradient(135deg,#6f94b8,#123c6c 50%,#1c4a7c)}`,
`<svg class="arc" width="90" height="39"><defs><filter id="f"><feGaussianBlur stdDeviation="1.500"/></filter></defs><path d="M10-2Q45 14 68 41" fill="none" stroke="#a8d2fa" stroke-width="9" filter="url(#f)"/></svg>
<div class="q"><ui-icon name="orb" w="38" style="margin-left:8px"></ui-icon><ui-icon name="explorer" w="33" h="29" style="margin-left:27px"></ui-icon><ui-icon name="wmp" w="29" h="25" style="margin-left:31px"></ui-icon><ui-icon name="firefox" w="31" style="margin-left:32px"></ui-icon><ui-icon name="chrome" w="31" style="margin-left:30px"></ui-icon><ui-icon name="ie" w="32" h="31" style="margin-left:31px"></ui-icon><ui-icon name="rdp" w="31" style="margin-left:31px"></ui-icon></div>
<div class="b"><task-button><ui-icon name="skype" w="29"></ui-icon></task-button><task-button><ui-icon name="chrome" w="31"></ui-icon></task-button><task-button style="width:52px"><ui-icon name="vs" w="32"></ui-icon></task-button><div class="stack"></div><task-button><ui-icon name="tools" w="32"></ui-icon></task-button><task-button><ui-icon name="notes" w="34" h="25"></ui-icon></task-button><task-button><ui-icon name="notepad" w="31"></ui-icon></task-button><task-button on><ui-icon name="calc" w="23" h="30"></ui-icon></task-button></div>
<div class="tray"><svg width="8" height="4"><path d="M4 0 8 4H0z" fill="#fff"/></svg><ui-icon name="net" w="15" style="margin-left:5px"></ui-icon><ui-icon name="flag" style="margin-left:1px"></ui-icon><ui-icon name="mute"></ui-icon>
<div class="clock"><fit-text w="43">7:40 PM</fit-text><fit-text w="52">4/13/2017</fit-text></div></div>
<div class="show"></div>`);

component('desktop-screen', `
:host{display:grid;grid-template-rows:90px 770px 40px;width:1600px;height:900px;position:relative;overflow:hidden}
.view{display:grid;grid-template-columns:1583px 17px}`,
`<browser-chrome></browser-chrome>
<div class="view"><div><article-page></article-page><share-bar></share-bar></div><scroll-bar></scroll-bar></div>
<task-bar></task-bar><calculator-window></calculator-window>`);

/* Adjusts tracking so that a label takes exactly the given width. */
component('fit-text', `:host{display:inline-block;white-space:nowrap}`, `<slot></slot>`, el => {
  const want = +el.getAttribute('w'), have = el.getBoundingClientRect().width, n = el.textContent.length;
  el.style.letterSpacing = ((want - have) / n).toFixed(3) + 'px';
});
</script>
</body>
</html>
